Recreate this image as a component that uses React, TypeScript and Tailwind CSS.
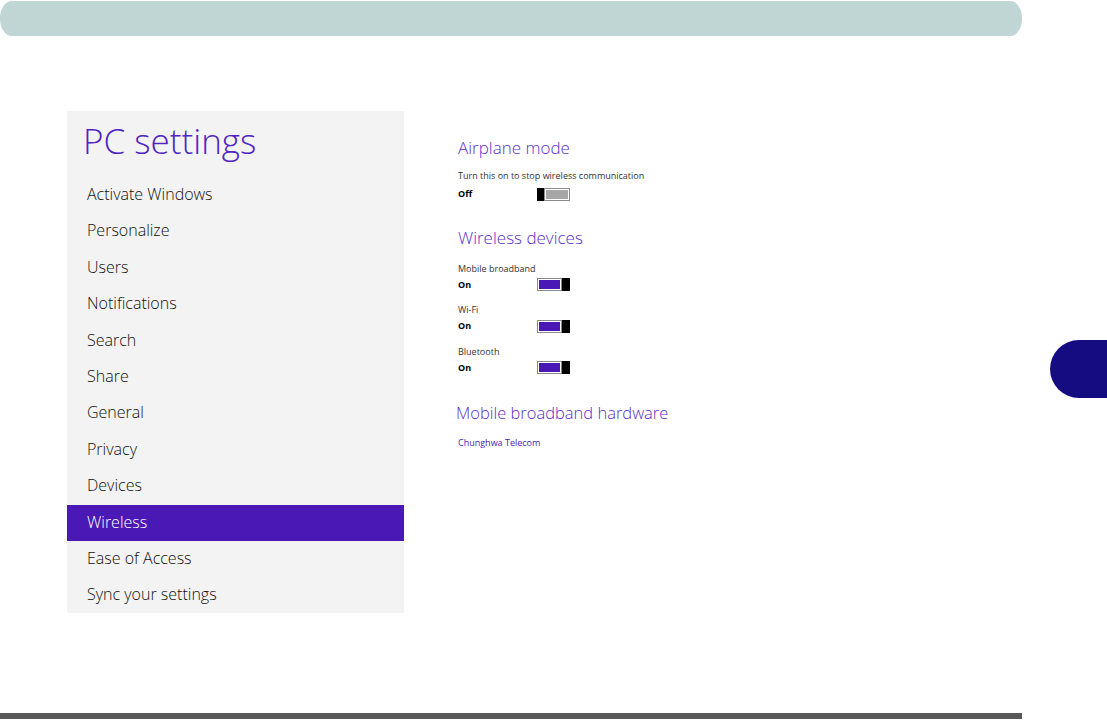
const MENU = [
  "Activate Windows",
  "Personalize",
  "Users",
  "Notifications",
  "Search",
  "Share",
  "General",
  "Privacy",
  "Devices",
  "Wireless",
  "Ease of Access",
  "Sync your settings",
];

function Toggle({ on }: { on: boolean }) {
  if (on) {
    return (
      <div className="flex h-[13px] w-[33px]">
        <div className="flex-1 border border-[#8a8a8a] bg-white p-px">
          <div className="h-full w-full bg-[#4a19b5]" />
        </div>
        <div className="h-full w-[8px] bg-black" />
      </div>
    );
  }
  return (
    <div className="flex h-[13px] w-[33px]">
      <div className="h-full w-[7px] bg-black" />
      <div className="flex-1 border border-[#8a8a8a] bg-white p-px">
        <div className="h-full w-full bg-[#a6a6a6]" />
      </div>
    </div>
  );
}

function Setting({ label, on }: { label: string; on: boolean }) {
  return (
    <div className="mt-[11.5px]">
      <p className="text-[9px] leading-[14px] text-[#333]">{label}</p>
      <div className="mt-[2px] flex h-[14px] items-center">
        <span className="w-[79px] text-[9px] font-bold text-black">{on ? "On" : "Off"}</span>
        <Toggle on={on} />
      </div>
    </div>
  );
}

export default function App() {
  return (
    <div className="relative h-[721px] w-[1107px] overflow-hidden bg-white font-['Open_Sans',sans-serif]">
      <div className="mt-px h-[35px] w-[1022px] rounded-[12px/17px] bg-[#c0d6d4]" />

      <div className="mt-[75px] flex">
        <div className="ml-[67px] h-[502px] w-[337px] bg-[#f3f3f3]">
          <h1 className="h-[66.4px] pl-[16px] pt-[6px] text-[35px] font-light leading-[48px] text-[#4f24c2]">
            PC settings
          </h1>
          {MENU.map((m) => (
            <div
              key={m}
              className={
                m === "Wireless"
                  ? "flex h-[36.4px] items-center bg-[#4a19b5] pb-[3px] pl-[20px] text-[16px] font-light text-white"
                  : "flex h-[36.4px] items-center pb-[3px] pl-[20px] text-[16px] font-light text-[#111]"
              }
            >
              {m}
            </div>
          ))}
        </div>

        <div className="w-[646px] pl-[54px] pt-[25px]">
          <h2 className="text-[17px] font-light leading-[24px] text-[#5a2fc8]">Airplane mode</h2>
          <p className="mt-[9px] text-[9px] leading-[14px] text-[#333]">
            Turn this on to stop wireless communication
          </p>
          <div className="mt-[4px] flex h-[14px] items-center">
            <span className="w-[79px] text-[9px] font-bold text-black">Off</span>
            <Toggle on={false} />
          </div>

          <h2 className="mt-[25px] text-[17px] font-light leading-[24px] text-[#5a2fc8]">
            Wireless devices
          </h2>
          <Setting label="Mobile broadband" on />
          <Setting label="Wi-Fi" on />
          <Setting label="Bluetooth" on />

          <h2 className="-ml-[2px] mt-[26px] text-[16.5px] font-light leading-[24px] text-[#5a2fc8]">
            Mobile broadband hardware
          </h2>
          <p className="mt-[11px] text-[9px] leading-[14px] text-[#4a19b5]">Chunghwa Telecom</p>
        </div>

        <div className="mt-[229px] h-[58px] w-[57px] rounded-l-[29px] bg-[#140c80]" />
      </div>

      <div className="absolute left-0 top-[713px] h-[6px] w-[1022px] bg-[#595959]" />
    </div>
  );
}
